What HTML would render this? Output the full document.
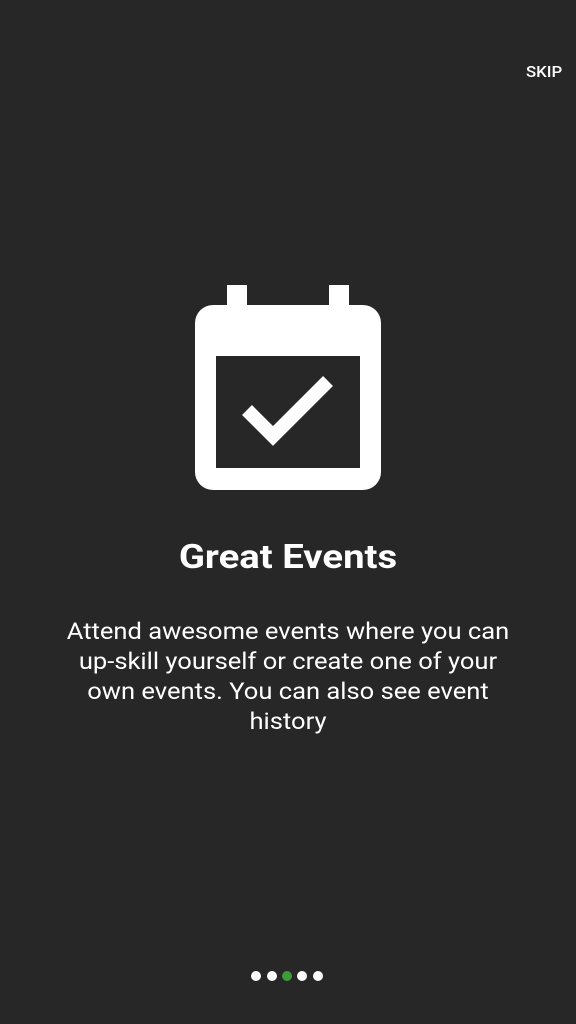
<!DOCTYPE html>
<html><head><meta charset="utf-8"><style>
html,body{margin:0;padding:0;}
body{width:576px;height:1024px;background:#272727;position:relative;overflow:hidden;font-family:"Roboto","Liberation Sans",sans-serif;color:#fff;}
.skip{position:absolute;left:526px;top:62px;font-size:16px;font-weight:500;transform:scaleX(1.05);transform-origin:left;}
.title{position:absolute;left:0;width:576px;top:538px;text-align:center;font-size:33px;font-weight:bold;line-height:40px;transform:scaleX(1.16);}
.body{position:absolute;left:63px;width:450px;top:617px;text-align:center;font-size:23px;line-height:30px;white-space:nowrap;transform:scaleX(1.11);}
.dot{position:absolute;top:971px;width:10px;height:10px;border-radius:50%;background:#fff;}
</style></head><body>
<div class="skip">SKIP</div>
<svg style="position:absolute;left:0;top:0" width="576" height="1024">
<rect x="227" y="285" width="20" height="25" fill="#fff"/>
<rect x="329" y="285" width="20" height="25" fill="#fff"/>
<path fill="#fff" fill-rule="evenodd" d="M213 305H363A18 18 0 0 1 381 323V472A18 18 0 0 1 363 490H213A18 18 0 0 1 195 472V323A18 18 0 0 1 213 305ZM216 356V468H360V356Z"/>
<path d="M247 410L273 436L328 381" stroke="#fff" stroke-width="14" fill="none" stroke-linecap="butt" stroke-linejoin="miter"/>
</svg>
<div class="title">Great Events</div>
<div class="body">Attend awesome events where you can<br>up-skill yourself or create one of your<br>own events. You can also see event<br>history</div>
<div class="dot" style="left:251px"></div>
<div class="dot" style="left:267px"></div>
<div class="dot" style="left:282px;background:#3f9a3a"></div>
<div class="dot" style="left:297px"></div>
<div class="dot" style="left:313px"></div>
</body></html>
